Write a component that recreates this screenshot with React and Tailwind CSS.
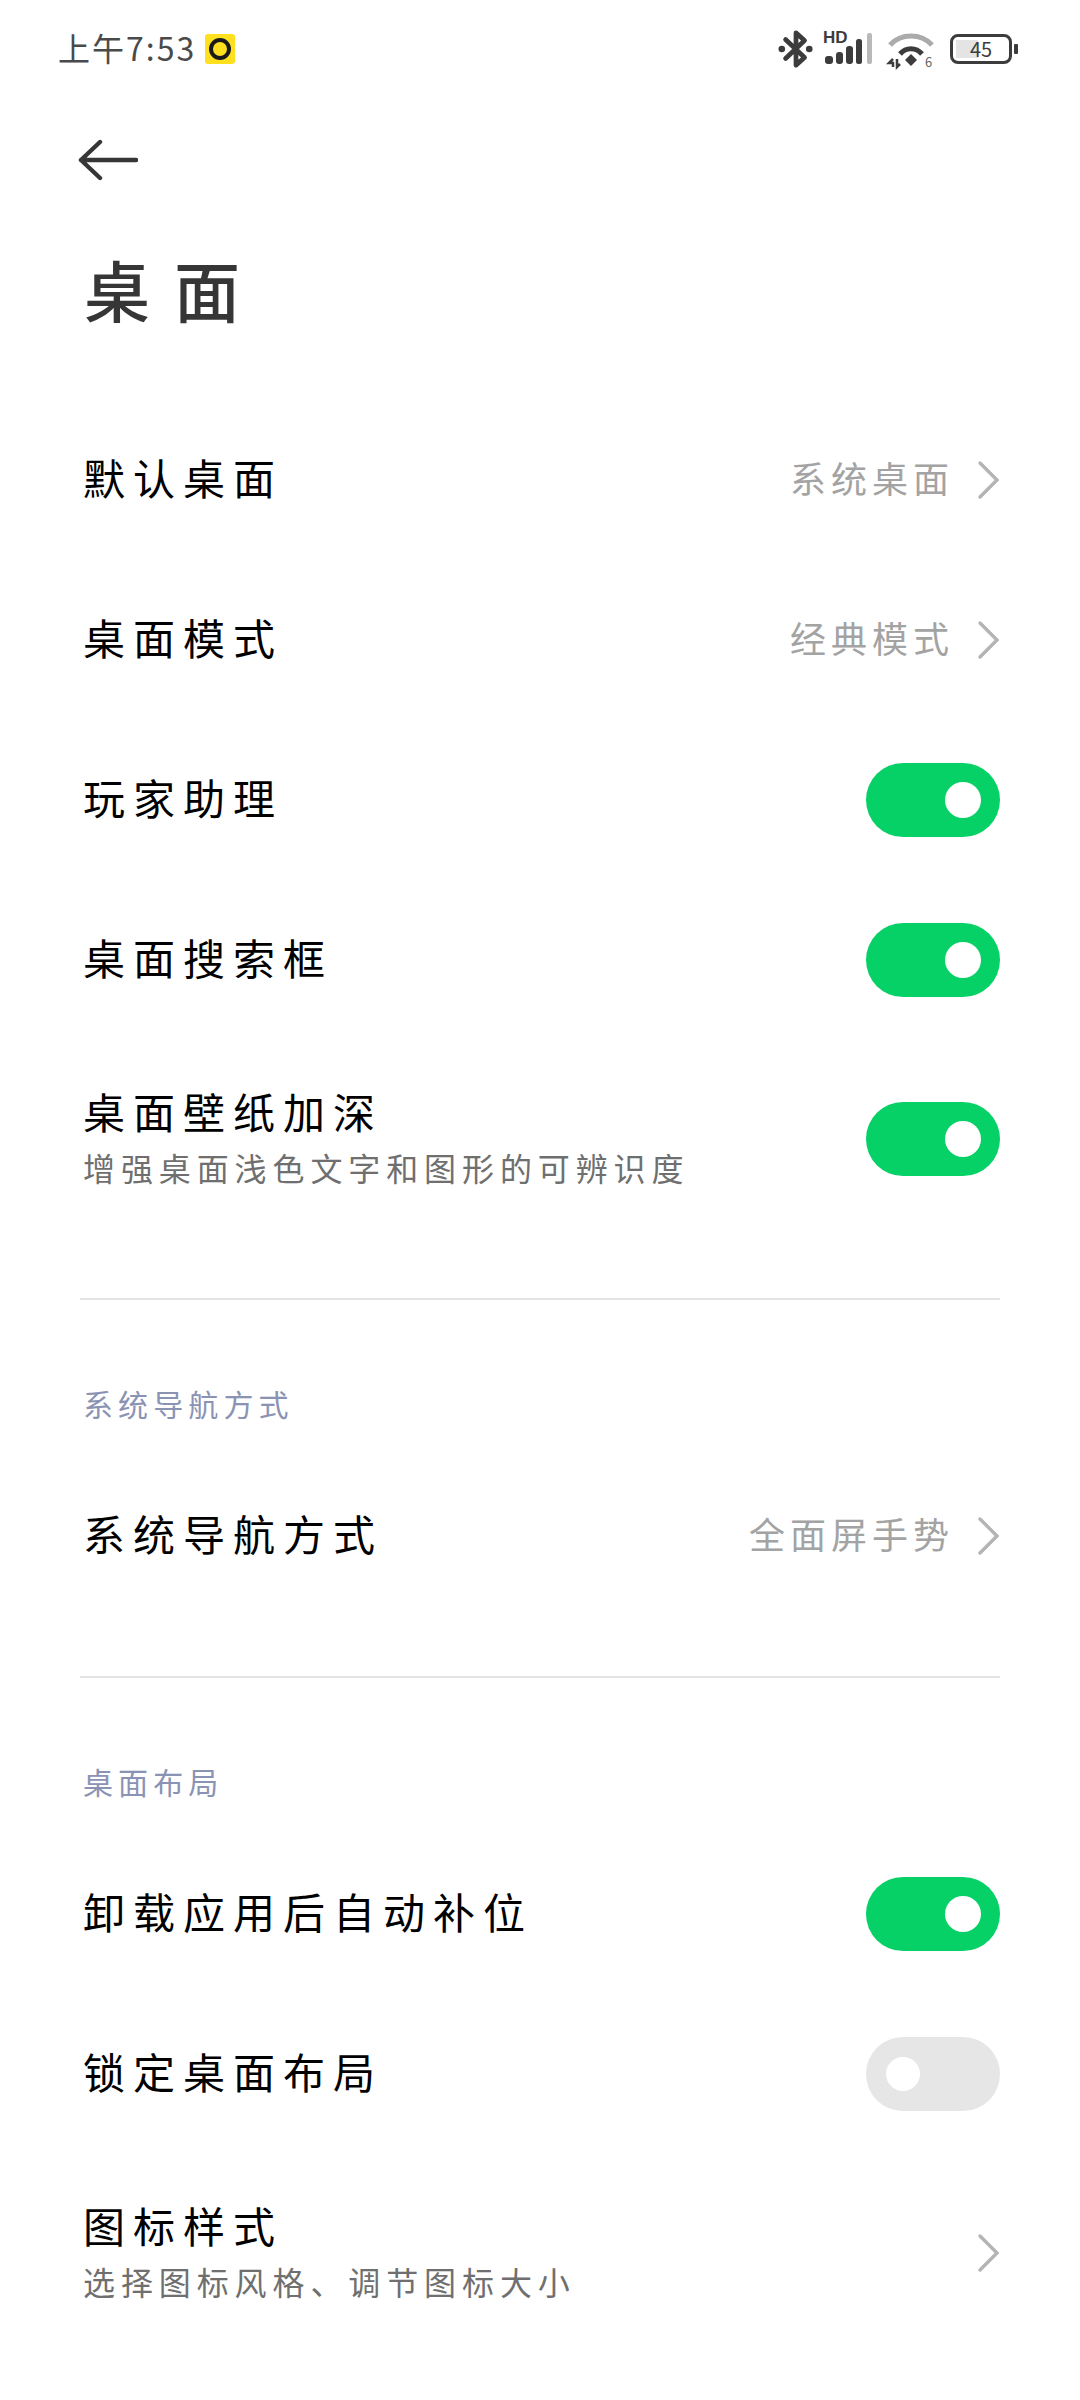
import React from "react";

function Chevron() {
    return (
        <svg width="24" height="40" viewBox="0 0 24 40" className="shrink-0 mr-[-1px]">
            <path d="M3 3 L20 20 L3 37" fill="none" stroke="#b4b4b4" strokeWidth="3.4" strokeLinecap="round" strokeLinejoin="miter" />
        </svg>
    );
}

function Toggle({ on = true }) {
    return on ? (
        <div className="w-[134px] h-[74px] rounded-full bg-[#05d166] flex items-center justify-end pr-[19px] shrink-0">
            <div className="w-[36px] h-[36px] rounded-full bg-white" />
        </div>
    ) : (
        <div className="w-[134px] h-[74px] rounded-full bg-[#e6e6e6] flex items-center pl-[20px] shrink-0">
            <div className="w-[34px] h-[34px] rounded-full bg-white" />
        </div>
    );
}

function Row({ label, sub, value, toggle, chevron, tall }) {
    return (
        <div className={`flex items-center justify-between px-[80px] ${tall ? "h-[198px]" : "h-[160px]"}`}>
            <div className="flex flex-col gap-[10px] pb-[6px]">
                <div className="text-[42px] leading-[52px] tracking-[8px] text-black pl-[3px]">{label}</div>
                {sub && <div className="text-[32px] leading-[40px] tracking-[5.9px] text-[#6f6f6f] pl-[3px]">{sub}</div>}
            </div>
            <div className="flex items-center">
                {value && <span className="text-[36px] tracking-[5px] text-[#a3a3a3] mr-[23px] pb-[6px]">{value}</span>}
                {chevron && <Chevron />}
                {toggle !== undefined && <Toggle on={toggle} />}
            </div>
        </div>
    );
}

function SectionHeader({ children }) {
    return (
        <div className="h-[40px] flex items-center px-[83px] pb-[5px] text-[30px] tracking-[5.1px] text-[#8b93b4]">
            {children}
        </div>
    );
}

function StatusBar() {
    return (
        <div className="h-[98px] flex items-center justify-between pl-[58px] pr-[62px]">
            <div className="flex items-center gap-[9px]">
                <span className="text-[32px] leading-none tracking-[2px] text-[#4a4a4a] pb-[4px]">上午7:53</span>
                <div className="w-[30px] h-[30px] rounded-[3px] bg-[#ffe01f] flex items-center justify-center">
                    <div className="w-[22px] h-[22px] rounded-full border-[4px] border-[#1a1a1a]" />
                </div>
            </div>
            <div className="flex items-center">
                <svg width="36" height="40" viewBox="0 0 38 40" className="mr-[11px]">
                    <path d="M8 10 L28 29 L19 37 L19 3 L28 11 L8 30" fill="none" stroke="#3c3c3c" strokeWidth="5" strokeLinejoin="round" strokeLinecap="round" />
                    <circle cx="4" cy="20" r="3.5" fill="#3c3c3c" />
                    <circle cx="33" cy="20" r="3.5" fill="#3c3c3c" />
                </svg>
                <div className="relative w-[50px] h-[33px] mr-[13px]">
                    <span className="absolute left-[-2px] top-[-4px] text-[17px] leading-[18px] font-bold text-[#3c3c3c] font-['Liberation_Sans',sans-serif]">HD</span>
                    <svg width="50" height="33" viewBox="0 0 50 33" className="absolute left-0 top-0">
                        <rect x="0" y="23" width="8" height="8" rx="3" fill="#3c3c3c" />
                        <rect x="11" y="19" width="7" height="12" rx="3" fill="#3c3c3c" />
                        <rect x="21" y="13" width="7" height="18" rx="3" fill="#3c3c3c" />
                        <rect x="31" y="6" width="6" height="25" rx="2.5" fill="#3c3c3c" />
                        <rect x="42" y="0" width="5" height="31" rx="2" fill="#b9b9b9" />
                    </svg>
                </div>
                <svg width="46" height="38" viewBox="0 0 46 38" className="mr-[16px] overflow-visible">
                    <path d="M2 15 C13 3 33 3 44 15" fill="none" stroke="#ababab" strokeWidth="5" />
                    <path d="M12 24 C18 17 28 17 34 24" fill="none" stroke="#3c3c3c" strokeWidth="5" />
                    <path d="M17 30 L23 24 L29 30 L23 36 Z" fill="#3c3c3c" />
                    <path d="M5 29 L1 33 L5 33 L5 37 M9 29 L9 37 L12 34" fill="none" stroke="#3c3c3c" strokeWidth="2.5" />
                    <text x="37" y="37" fontSize="13" fill="#666666">6</text>
                </svg>
                <div className="flex items-center">
                    <div className="relative w-[62px] h-[30px] rounded-[8px] border-[3.5px] border-[#3c3c3c] flex items-center justify-center">
                        <div className="absolute left-[3px] top-[3px] bottom-[3px] w-[22px] bg-[#e4e4e4]" />
                        <span className="relative text-[20px] leading-none text-[#3c3c3c]">45</span>
                    </div>
                    <div className="w-[4px] h-[10px] ml-[2px] rounded-[1px] bg-[#3c3c3c]" />
                </div>
            </div>
        </div>
    );
}

export default function App() {
    return (
        <div className="w-[1080px] h-[2400px] bg-white overflow-hidden font-['Noto_Sans_CJK_SC',sans-serif]">
            <StatusBar />
            <div className="h-[124px] flex items-center pl-[78px]">
                <svg width="60" height="42" viewBox="0 0 60 42">
                    <path d="M3 21 H58 M22 3 L3 21 L22 39" fill="none" stroke="#363636" strokeWidth="4.4" strokeLinecap="round" strokeLinejoin="round" />
                </svg>
            </div>
            <div className="h-[140px] mb-[38px] flex items-center pl-[84px] pb-[7px] text-[66px] tracking-[24px] font-medium text-[#363636]">桌面</div>

            <Row label="默认桌面" value="系统桌面" chevron />
            <Row label="桌面模式" value="经典模式" chevron />
            <Row label="玩家助理" toggle={true} />
            <Row label="桌面搜索框" toggle={true} />
            <Row label="桌面壁纸加深" sub="增强桌面浅色文字和图形的可辨识度" toggle={true} tall />

            <div className="h-[2px] mx-[80px] mt-[60px] mb-[86px] bg-[#e4e4e4]" />
            <SectionHeader>系统导航方式</SectionHeader>
            <div className="mt-[30px]">
                <Row label="系统导航方式" value="全面屏手势" chevron />
            </div>

            <div className="h-[2px] mx-[80px] mt-[60px] mb-[86px] bg-[#e4e4e4]" />
            <SectionHeader>桌面布局</SectionHeader>
            <div className="mt-[30px]">
                <Row label="卸载应用后自动补位" toggle={true} />
                <Row label="锁定桌面布局" toggle={false} />
                <Row label="图标样式" sub="选择图标风格、调节图标大小" chevron tall />
            </div>
        </div>
    );
}
